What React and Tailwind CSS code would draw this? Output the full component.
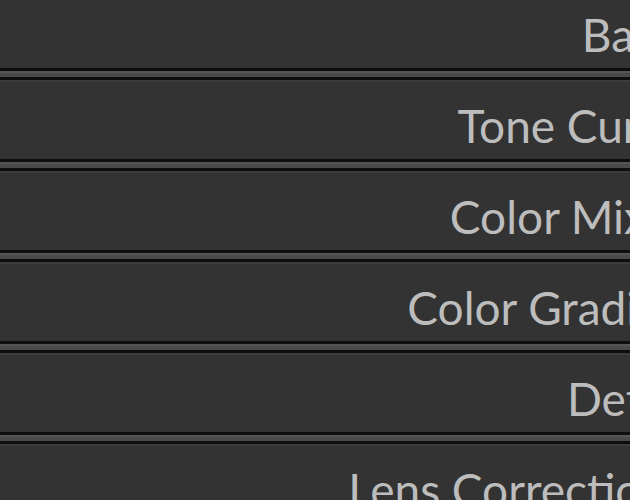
const panels = ["Basic", "Tone Curve", "Color Mixer", "Color Grading", "Detail", "Lens Corrections"];

const Divider = () => (
    <div className="flex flex-col">
        <div className="h-[3px] bg-[#0e0e0e]" />
        <div className="h-[2px] bg-[#555555]" />
        <div className="h-[4px] bg-[#4a4a4a]" />
        <div className="h-[3px] bg-[#0e0e0e]" />
        <div className="h-[2px] bg-[#3c3c3c]" />
    </div>
);

const App = () => {
    return (
        <div className="w-[630px] h-[500px] overflow-hidden bg-[#333333]">
            <div className="flex flex-col w-[687px] -mt-[9px]">
                {panels.map((name, i) => (
                    <div key={name} className="flex flex-col">
                        {i > 0 && <Divider />}
                        <div className="flex items-center justify-end h-[77px] pt-[10px] text-[46px] leading-none whitespace-nowrap text-[#bdbdbd] font-['Lato',sans-serif]">
                            {name}
                        </div>
                    </div>
                ))}
            </div>
        </div>
    );
};

export default App;
